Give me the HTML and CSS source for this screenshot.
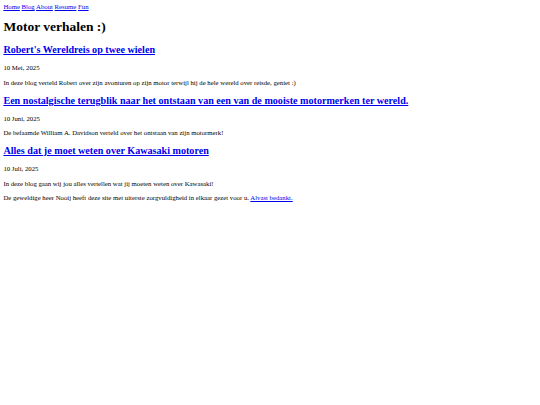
FILE: index.html
```html
<!DOCTYPE html>
<html lang="nl">
<head>
<meta charset="utf-8">
<title>Motor verhalen</title>
<link rel="stylesheet" href="styles.css">
</head>
<body class="page">
<nav class="nav">
<a href="#">Home</a>
<a href="#">Blog</a>
<a href="#">About</a>
<a href="#">Resume</a>
<a href="#">Fun</a>
</nav>
<h1 class="title">Motor verhalen :)</h1>
<article class="post">
<h2 class="post-title"><a href="#">Robert's Wereldreis op twee wielen</a></h2>
<p class="post-date">10 Mei, 2025</p>
<p class="post-text">In deze blog verteld Robert over zijn avonturen op zijn motor terwijl hij de hele wereld over reisde, geniet :)</p>
</article>
<article class="post">
<h2 class="post-title"><a href="#">Een nostalgische terugblik naar het ontstaan van een van de mooiste motormerken ter wereld.</a></h2>
<p class="post-date">10 Juni, 2025</p>
<p class="post-text">De befaamde William A. Davidson verteld over het ontstaan van zijn motormerk!</p>
</article>
<article class="post">
<h2 class="post-title"><a href="#">Alles dat je moet weten over Kawasaki motoren</a></h2>
<p class="post-date">10 Juli, 2025</p>
<p class="post-text">In deze blog gaan wij jou alles vertellen wat jij moeten weten over Kawasaki!</p>
</article>
<p class="post-text footer">De geweldige heer Nooij heeft deze site met uiterste zorgvuldigheid in elkaar gezet voor u. <a href="#">Alvast bedankt.</a></p>
</body>
</html>
```

FILE: styles.css
```css
html {
  background: #ffffff;
}
.page {
  margin: 3.4px;
  font-family: "Liberation Serif", "Times New Roman", serif;
  font-size: 6.75px;
  line-height: 7.8px;
  color: #000000;
}
a {
  color: #0000ee;
}
.nav {
  display: block;
}
.title {
  font-size: 13.5px;
  line-height: 15.5px;
  font-weight: bold;
  margin: 8px 0 9.3px;
}
.post-title {
  font-size: 10.12px;
  line-height: 12px;
  margin: 8.1px 0;
}
.post-date,
.post-text {
  font-size: 6.75px;
  line-height: 7.8px;
  margin: 6.8px 0;
}
.footer {
  margin-top: 4.6px;
}
```
